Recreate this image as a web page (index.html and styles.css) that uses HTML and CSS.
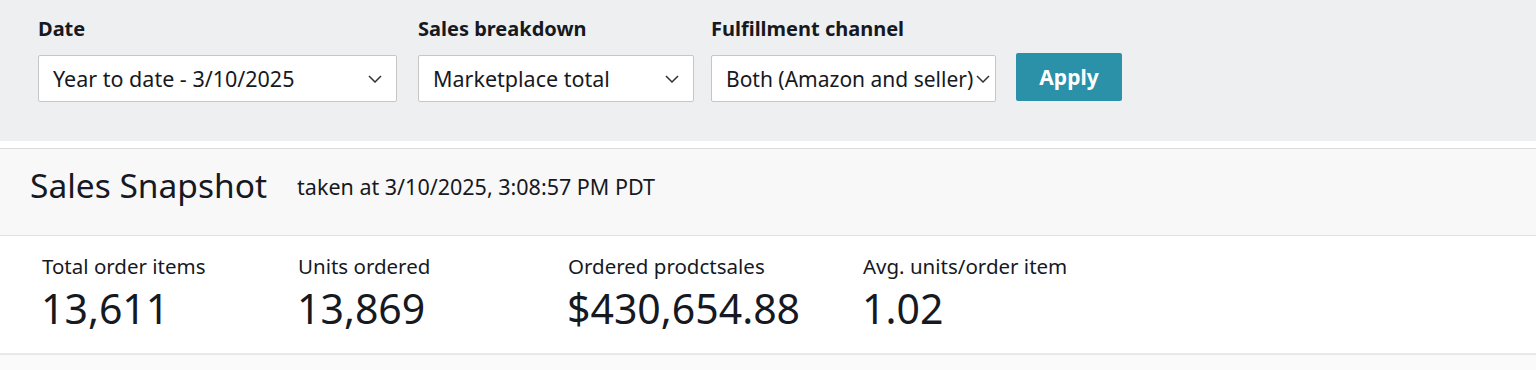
FILE: index.html
```html
<!DOCTYPE html>
<html lang="en">
  <head>
    <meta charset="UTF-8" />
    <title>Sales Dashboard</title>
    <link rel="stylesheet" href="styles.css">
  </head>
  <body>
    <!-- 筛选条件 -->
    <div class="filters">
      <div class="field date">
        <label>Date</label>
        <div class="select">
          <span>Year to date - 3/10/2025</span>
          <svg class="chev" viewBox="0 0 14 8"><path d="M1 1l6 6 6-6"/></svg>
        </div>
      </div>
      <div class="field breakdown">
        <label>Sales breakdown</label>
        <div class="select">
          <span>Marketplace total</span>
          <svg class="chev" viewBox="0 0 14 8"><path d="M1 1l6 6 6-6"/></svg>
        </div>
      </div>
      <div class="field channel">
        <label>Fulfillment channel</label>
        <div class="select tight">
          <span>Both (Amazon and seller)</span>
          <svg class="chev" viewBox="0 0 14 8"><path d="M1 1l6 6 6-6"/></svg>
        </div>
      </div>
      <button class="apply">Apply</button>
    </div>
    <div class="spacer"></div>
    <!-- 标题 -->
    <div class="snap-head">
      <h1>Sales Snapshot</h1>
      <span class="taken">taken at 3/10/2025, 3:08:57 PM PDT</span>
    </div>
    <!-- 数据 -->
    <div class="metrics">
      <div class="metric m1">
        <div class="m-label">Total order items</div>
        <div class="m-value">13,611</div>
      </div>
      <div class="metric m2">
        <div class="m-label">Units ordered</div>
        <div class="m-value">13,869</div>
      </div>
      <div class="metric m3">
        <div class="m-label">Ordered prodctsales</div>
        <div class="m-value">$430,654.88</div>
      </div>
      <div class="metric m4">
        <div class="m-label">Avg. units/order item</div>
        <div class="m-value">1.02</div>
      </div>
    </div>
    <div class="below"></div>
  </body>
</html>
```

FILE: styles.css
```css
* {
  margin: 0;
  padding: 0;
  box-sizing: border-box;
}
body {
  font-family: "Noto Sans", "Open Sans", sans-serif;
  color: #16191f;
  background: #fff;
}
/* 筛选条件 */
.filters {
  height: 141px;
  background: #eeeff0;
  display: flex;
  align-items: flex-start;
  padding: 16px 0 0 38px;
}
.field label {
  display: block;
  font-size: 20px;
  font-weight: 700;
  line-height: 26px;
  color: #16191f;
  margin-bottom: 13px;
}
.select {
  height: 47px;
  background: #fff;
  border: 1px solid #c6c6c6;
  border-radius: 2px;
  display: flex;
  align-items: center;
  justify-content: space-between;
  padding: 0 14px 0 14px;
  font-size: 21.5px;
}
.select.tight {
  padding-right: 5px;
  font-size: 21px;
}
.chev {
  width: 14px;
  height: 8px;
  flex-shrink: 0;
  fill: none;
  stroke: #333;
  stroke-width: 1.5;
}
.date {
  width: 359px;
  margin-right: 21px;
}
.breakdown {
  width: 276px;
  margin-right: 17px;
}
.channel {
  width: 285px;
  margin-right: 20px;
}
.apply {
  margin-top: 37px;
  width: 106px;
  height: 48px;
  background: #2a91a9;
  color: #fff;
  border: none;
  border-radius: 2px;
  font-family: inherit;
  font-size: 21px;
  font-weight: 700;
}
.spacer {
  height: 7px;
  background: #fff;
}
/* 标题 */
.snap-head {
  height: 88px;
  background: #f8f8f8;
  border-top: 1px solid #dcdcdc;
  border-bottom: 1px solid #e2e2e2;
  display: flex;
  align-items: center;
  padding: 0 0 15px 30px;
}
.snap-head h1 {
  font-size: 33.5px;
  font-weight: 400;
  margin-right: 30px;
}
.taken {
  font-size: 21.5px;
  padding-top: 4px;
}
/* 数据 */
.metrics {
  height: 119px;
  border-bottom: 2px solid #e8e8e8;
  display: flex;
  padding: 17px 0 0 42px;
}
.m-label {
  font-size: 20.5px;
  line-height: 26px;
}
.m-value {
  font-size: 41px;
  line-height: 52px;
  margin: 3px 0 0 -1px;
}
.m1 {
  width: 256px;
}
.m2 {
  width: 270px;
}
.m3 {
  width: 295px;
}
.below {
  height: 20px;
  background: #fafafa;
}
```
